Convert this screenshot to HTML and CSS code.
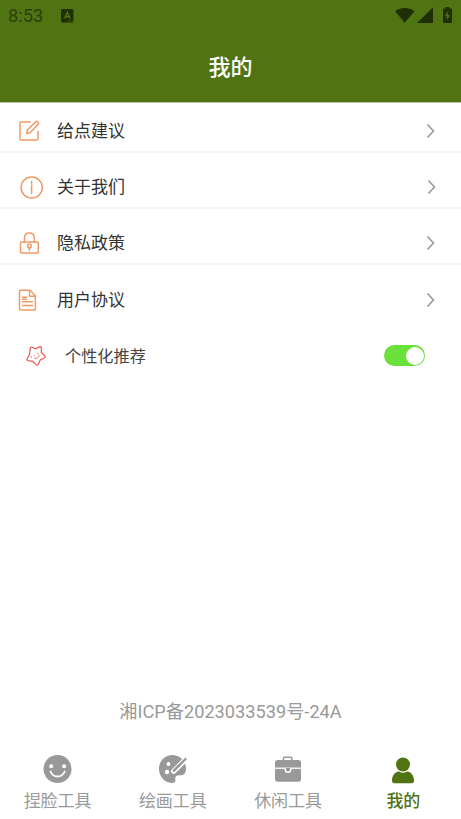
FILE: index.html
```html
<!DOCTYPE html>
<html lang="zh-CN">
<head>
<meta charset="utf-8">
<title>我的</title>
<link rel="stylesheet" href="styles.css">
</head>
<body>
<header class="header">
  <div class="status">
    <span class="clock">8:53</span>
    <svg class="app-mark" width="13" height="14" viewBox="0 0 13 14"><rect width="12.5" height="13.5" rx="1.5" fill="#203006"/><path d="M3.6 9.5 6.3 3.5 9 9.5M4.5 7.7H8" fill="none" stroke="#517413" stroke-width="1.4"/><path d="M7 11.7h1m1 0h1m1 0h1" stroke="#517413" stroke-width=".8"/></svg>
    <span class="grow"></span>
    <svg class="signals" width="60" height="20" viewBox="0 0 60 20" fill="#203006"><path d="M0 5.2C5.6.8 13.900.8 19.500 5.200L9.750 16.700z"/><path d="M38 1.200V17H22z"/><path d="M50.500 1H54.500V2.500H56.200Q57 2.500 57 3.500V16Q57 17 56.200 17H49Q48 17 48 16V3.500Q48 2.500 49 2.500H50.500z"/><path d="M53.200 5 49.900 10.200H52.100L51.600 14.500 55.100 9H52.700z" fill="#517413"/></svg>
  </div>
  <h1 class="title">我的</h1>
</header>
<main class="main">
  <ul class="menu">
    <li class="row row-first">
      <svg class="icon" width="26" height="26" viewBox="0 0 26 26"><path d="M13.200 4H4.500Q3 4 3 5.500V20.500Q3 22 4.500 22H19.500Q21 22 21 20.500V13.200M9.700 15.500 10.400 12 18.700 3.700Q19.500 3 20.400 3.800L21.300 4.700Q22 5.500 21.300 6.300L13 14.700z"/></svg>
      <span class="label">给点建议</span>
      <svg class="chevron" width="10" height="16" viewBox="0 0 10 16"><path d="M1.500 1.500 7.500 8 1.500 14.500"/></svg>
    </li>
    <li class="row row-about">
      <svg class="icon" width="26" height="26" viewBox="0 0 26 26"><circle cx="14.700" cy="13.500" r="10.600"/><path d="M14.600 11V19.500M14.600 7.400V9.200"/></svg>
      <span class="label">关于我们</span>
      <svg class="chevron" width="10" height="16" viewBox="0 0 10 16"><path d="M1.500 1.500 7.500 8 1.500 14.500"/></svg>
    </li>
    <li class="row">
      <svg class="icon" width="26" height="26" viewBox="0 0 26 26"><rect x="3.500" y="12" width="17.800" height="11" rx="1"/><path d="M7.500 12V8Q7.500 3 12.400 3T17.300 8V12M12.400 17.500V20.500"/><circle cx="12.400" cy="16" r="1.900"/></svg>
      <span class="label">隐私政策</span>
      <svg class="chevron" width="10" height="16" viewBox="0 0 10 16"><path d="M1.500 1.500 7.500 8 1.500 14.500"/></svg>
    </li>
    <li class="row row-last">
      <svg class="icon" width="26" height="26" viewBox="0 0 26 26"><path d="M4.500 3.300H14L19.400 8.700V22Q19.400 23 18.400 23H4.500Q3.500 23 3.500 22V4.300Q3.500 3.300 4.500 3.300zM13.500 3.500V9.200H19.200M6.500 10.200H10.500M6.500 12.300H10.500M6.500 14.700H16.500M6.500 18.500H16.500"/></svg>
      <span class="label">用户协议</span>
      <svg class="chevron" width="10" height="16" viewBox="0 0 10 16"><path d="M1.500 1.500 7.500 8 1.500 14.500"/></svg>
    </li>
  </ul>
  <div class="recommend">
    <svg class="star" width="22" height="22" viewBox="0 0 22 22"><path d="M5.300 2.700Q6 1.700 7 2.300L10.500 3.900 15.200 1.700Q16.500 1.500 16.400 2.900L16.300 7.500 20 11.200Q20.800 12.300 19.500 13L15.500 14.800 12.800 19.800Q12 20.700 11 19.700L7.800 16.300 3 15.700Q1.500 15.300 2.100 14L4.500 9.300z"/><path class="face" d="M6.300 11.400v.8M9.500 10.700h.1M13.200 8.200v.8M9.500 13.300Q13.500 14 14.200 10.300"/></svg>
    <span class="recommend-label">个性化推荐</span>
    <span class="switch"><span class="knob"></span></span>
  </div>
  <p class="record">湘ICP备2023033539号-24A</p>
</main>
<nav class="tabs">
  <a class="tab">
    <svg width="30" height="30" viewBox="0 0 30 30"><circle cx="14.500" cy="15" r="14" fill="#999"/><circle cx="8.200" cy="12.300" r="2" fill="#fff"/><circle cx="21.100" cy="12.300" r="2" fill="#fff"/><path d="M7.500 17.500Q9.500 22.500 14.500 22.500T21.700 17.500" fill="none" stroke="#fff" stroke-width="1.800" stroke-linecap="round"/></svg>
    <span>捏脸工具</span>
  </a>
  <a class="tab">
    <svg width="30" height="30" viewBox="0 0 30 30"><path d="M14.500 1C6.700 1 1 7.200 1 15S7 29 14.500 29C17 29 17.800 27.500 17.300 25.500 16.800 22.500 18.500 21.300 21 21.300 25.500 21.800 28 19.500 28 15 28 7 22 1 14.500 1z" fill="#999"/><path d="M28.300 4.500 19.200 13.800 15.700 17.200" stroke="#fff" stroke-width="5.200" stroke-linecap="round"/><path d="M27.500 5 20.500 12" stroke="#999" stroke-width="2.400" stroke-linecap="round"/><path d="M20.500 12 15.800 16.700" stroke="#999" stroke-width="2.600" stroke-linecap="round"/><circle cx="10.500" cy="10" r="1.900" fill="#fff"/><circle cx="9" cy="18" r="2.200" fill="#fff"/></svg>
    <span>绘画工具</span>
  </a>
  <a class="tab">
    <svg width="30" height="30" viewBox="0 0 30 30"><path d="M10.500 6V4.300Q10.500 3.300 11.500 3.300H17.800Q18.800 3.300 18.800 4.300V6" fill="none" stroke="#999" stroke-width="1.600"/><rect x="2" y="6" width="26" height="21.700" rx="2.500" fill="#999"/><path d="M2 14.200H28" stroke="#fff" stroke-width="1.300"/><path d="M12.300 14V16Q12.300 18.300 15 18.300T17.700 16V14" fill="#999" stroke="#fff" stroke-width="1.500"/></svg>
    <span>休闲工具</span>
  </a>
  <a class="tab active">
    <svg width="30" height="30" viewBox="0 0 30 30" fill="#517413"><circle cx="15" cy="10.500" r="7"/><path d="M4 26.500C4 21.500 7.200 17.500 11 17.500Q15 20 19 17.500C22.800 17.500 26 21.500 26 26.500Q26 29.300 23.500 29.300H6.500Q4 29.300 4 26.500z"/></svg>
    <span>我的</span>
  </a>
</nav>
</body>
</html>
```

FILE: styles.css
```css
* { box-sizing: border-box; }

body {
  margin: 0;
  height: 819px;
  display: flex;
  flex-direction: column;
  background: #fff;
  color: #333;
  font-family: Roboto, "Noto Sans CJK SC", sans-serif;
  overflow: hidden;
}

.header {
  height: 102px;
  flex: none;
  background: #517413;
}

.status {
  height: 32px;
  display: flex;
  align-items: center;
  padding: 0 6px 0 8px;
}

.clock {
  color: #2b400a;
  font-size: 18.3px;
  line-height: 20px;
  width: 53px;
}

.grow { flex: 1; }

.title {
  margin: 0;
  height: 70px;
  color: #fff;
  font-size: 22px;
  font-weight: 500;
  line-height: 71px;
  text-align: center;
}

.main {
  flex: 1;
  display: flex;
  flex-direction: column;
}

.menu {
  margin: 0;
  padding: 0;
  list-style: none;
}

.row {
  height: 56px;
  display: flex;
  align-items: center;
  padding: 14px 25px 0 17px;
  border-bottom: 2px solid #f5f5f5;
}

.row-first {
  height: 51px;
  padding-top: 9px;
  box-shadow: inset 0 1px #b9c7a1;
}

.row-about { padding-right: 24px; }

.row-last {
  padding-top: 15px;
  padding-left: 16px;
  border-bottom-color: transparent;
}

.row-last .label { margin-left: 15px; }

.icon {
  flex: none;
  fill: none;
  stroke: #ef9a64;
  stroke-width: 1.5;
  stroke-linejoin: round;
  stroke-linecap: round;
}

.label {
  flex: 1;
  margin-left: 14px;
  font-size: 17px;
  line-height: 24px;
}

.chevron {
  fill: none;
  stroke: #999;
  stroke-width: 1.6;
}

.recommend {
  height: 56px;
  display: flex;
  align-items: center;
  padding: 14px 36px 0 25px;
}

.star {
  fill: none;
  stroke: #f25555;
  stroke-width: 1.2;
  stroke-linecap: round;
}

.face { stroke-width: 0.8; }

.recommend-label {
  flex: 1;
  margin-left: 18px;
  font-size: 16.2px;
  line-height: 24px;
  padding-top: 1px;
  color: #444;
}

.switch {
  width: 41px;
  height: 21px;
  margin-top: -1px;
  padding: 1.5px;
  display: flex;
  justify-content: flex-end;
  border-radius: 11px;
  background: #6ae03a;
}

.knob {
  width: 18px;
  height: 18px;
  border-radius: 50%;
  background: #fff;
}

.record {
  margin: auto 0 26px;
  color: #999;
  font-size: 18.2px;
  line-height: 24px;
  text-align: center;
}

.tabs {
  height: 69px;
  flex: none;
  display: grid;
  grid-template-columns: repeat(4, 1fr);
}

.tab {
  display: flex;
  flex-direction: column;
  align-items: center;
  padding-top: 4px;
  color: #999;
  font-size: 17px;
  line-height: 24px;
}

.tab span { margin-top: 5px; }

.active {
  color: #517413;
  font-weight: 500;
}
```
